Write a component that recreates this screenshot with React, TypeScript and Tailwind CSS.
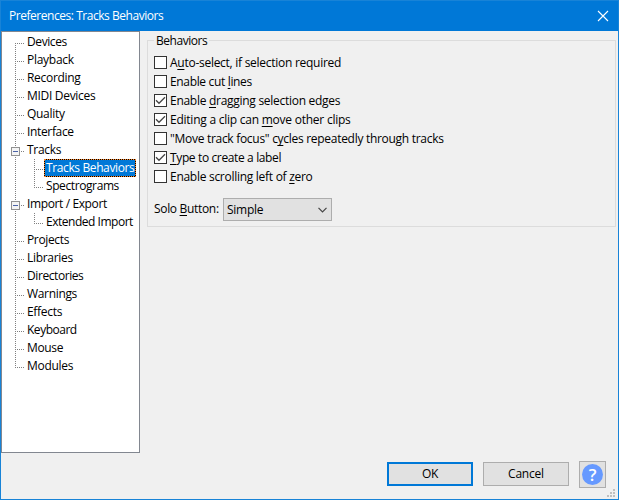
import React from 'react';

type TreeItem = { label: string; child?: boolean; open?: boolean; selected?: boolean; first?: boolean; last?: boolean; track: string };

const items: TreeItem[] = [
  { label: 'Devices', first: true, track: 'tracking-[-0.4px]' },
  { label: 'Playback', track: 'tracking-[-0.27px]' },
  { label: 'Recording', track: 'tracking-[-0.3px]' },
  { label: 'MIDI Devices', track: 'tracking-[-0.3px]' },
  { label: 'Quality', track: 'tracking-[-0.3px]' },
  { label: 'Interface', track: 'tracking-[-0.35px]' },
  { label: 'Tracks', open: true, track: 'tracking-[-0.3px]' },
  { label: 'Tracks Behaviors', child: true, selected: true, track: 'tracking-[-0.38px]' },
  { label: 'Spectrograms', child: true, last: true, track: 'tracking-[-0.4px]' },
  { label: 'Import / Export', open: true, track: 'tracking-[-0.38px]' },
  { label: 'Extended Import', child: true, last: true, track: 'tracking-[-0.48px]' },
  { label: 'Projects', track: 'tracking-[-0.35px]' },
  { label: 'Libraries', track: 'tracking-[-0.3px]' },
  { label: 'Directories', track: 'tracking-[-0.42px]' },
  { label: 'Warnings', track: 'tracking-[-0.33px]' },
  { label: 'Effects', track: 'tracking-[-0.3px]' },
  { label: 'Keyboard', track: 'tracking-[-0.48px]' },
  { label: 'Mouse', track: 'tracking-[-0.35px]' },
  { label: 'Modules', last: true, track: 'tracking-[-0.3px]' },
];

function Branches({ item }: { item: TreeItem }) {
  const x = item.child ? 32.5 : 13.5;
  const dash = { stroke: '#808080', strokeDasharray: '1 1' };
  return (
    <svg width="44" height="18" className="absolute left-0 top-0" shapeRendering="crispEdges" fill="none">
      {item.child && <path d="M13.5 0V18" {...dash} />}
      <path d={`M${x} ${item.first ? 10 : 0}V${item.last ? 11 : 18}`} {...dash} />
      <path d={`M${x - 0.5} 10.5h9`} {...dash} />
      {item.open && (
        <>
          <rect x="9.5" y="6.5" width="8" height="8" fill="#f4f4f4" stroke="#919191" />
          <path d="M11 10.5h5" stroke="#4b63a7" />
        </>
      )}
    </svg>
  );
}

function TreeRow({ item }: { item: TreeItem }) {
  return (
    <li className={`relative flex h-[18px] ${item.child ? 'pl-[42px]' : 'pl-[23px]'}`}>
      <Branches item={item} />
      <span className={`h-[18px] whitespace-nowrap pl-0.5 leading-[18px] ${item.track} ${item.selected ? 'w-[92px] bg-[#0078d7] text-white inset-ring inset-ring-black outline-1 -outline-offset-1 outline-dotted outline-[#ff8728]' : ''}`}>
        {item.label}
      </span>
    </li>
  );
}

type Option = { before: string; key: string; after: string; on?: boolean; track: string };
const options: Option[] = [
  { before: 'A', key: 'u', after: 'to-select, if selection required', track: 'tracking-[-0.27px]' },
  { before: 'Enable cut ', key: 'l', after: 'ines', track: 'tracking-[-0.34px]' },
  { before: 'Enable ', key: 'd', after: 'ragging selection edges', on: true, track: 'tracking-[-0.28px]' },
  { before: 'Editing a clip can ', key: 'm', after: 'ove other clips', on: true, track: 'tracking-[-0.24px]' },
  { before: '"Move track focus" c', key: 'y', after: 'cles repeatedly through tracks', track: 'tracking-[-0.29px]' },
  { before: '', key: 'T', after: 'ype to create a label', on: true, track: 'tracking-[-0.37px]' },
  { before: 'Enable scrolling left of ', key: 'z', after: 'ero', track: 'tracking-[-0.28px]' },
];

function Key({ children }: { children: string }) {
  return <span className="underline decoration-1 underline-offset-2 [text-decoration-skip-ink:none]">{children}</span>;
}

function CheckRow({ option }: { option: Option }) {
  return (
    <div className="flex h-[19px] items-center">
      <span className="mr-[3px] h-[13px] w-[13px] shrink-0 border border-[#333] bg-white">
        {option.on && (
          <svg width="11" height="11" fill="none" stroke="#444" strokeWidth="1.3">
            <path d="M1 5.3L4 8.3L10 2.3" />
          </svg>
        )}
      </span>
      <span className={`whitespace-pre ${option.track}`}>{option.before}<Key>{option.key}</Key>{option.after}</span>
    </div>
  );
}

export default function App() {
  return (
    <div className="relative flex h-[500px] w-[619px] flex-col overflow-hidden border border-[#1883d7] bg-[#f0f0f0] font-['Open_Sans','Noto_Sans',sans-serif] text-[12px] leading-[18px] text-black">
      <header className="flex h-[30px] shrink-0 items-center justify-between bg-[#0078d7] pl-2 pr-[9px] text-white">
        <span className="tracking-[-0.46px]">Preferences: Tracks Behaviors</span>
        <svg width="12" height="12" stroke="white" strokeWidth="1.1"><path d="M1 1L11 11M11 1L1 11" /></svg>
      </header>
      <main className="flex h-[422px] shrink-0">
        <ul className="w-[139px] shrink-0 border border-[#828790] bg-white pt-px">
          {items.map((item) => <TreeRow key={item.label} item={item} />)}
        </ul>
        <fieldset className="ml-[7px] mt-[9px] h-[187px] w-[469px] shrink-0 border border-[#dcdcdc] px-1.5">
          <div className="-mt-[9px] flex h-[18px]"><span className="bg-[#f0f0f0] px-0.5 tracking-[-0.45px]">Behaviors</span></div>
          <div className="mt-[3px]">
            {options.map((option) => <CheckRow key={option.after} option={option} />)}
          </div>
          <div className="mt-[11px] flex h-6 items-center">
            <span className="w-[69px] whitespace-nowrap tracking-[-0.32px]">Solo <Key>B</Key>utton:</span>
            <button className="mt-px flex h-[23px] w-[109px] items-center justify-between border border-[#adadad] bg-[#e1e1e1] pl-[3px] pr-1">
              <span className="tracking-[-0.25px]">Simple</span>
              <svg width="9" height="6" fill="none" stroke="#444" strokeWidth="1.2"><path d="M.5 .8L4.5 4.8L8.5 .8" /></svg>
            </button>
          </div>
        </fieldset>
      </main>
      <footer className="flex items-start pl-[386px] pt-2">
        <button className="mt-px h-6 w-[86px] border-2 border-[#0078d7] bg-[#e1e1e1] leading-5 tracking-[-0.3px]">OK</button>
        <button className="ml-[10px] mt-px h-6 w-[86px] border border-[#adadad] bg-[#e1e1e1] leading-[22px] tracking-[-0.2px]">Cancel</button>
        <button className="ml-[10px] flex h-[27px] w-[27px] items-center justify-center border border-[#adadad] bg-[#e1e1e1]">
          <span className="flex h-[21px] w-[21px] items-center justify-center rounded-full bg-[#6699ff] text-[17px] font-semibold leading-5 text-white">?</span>
        </button>
      </footer>
      <svg width="8" height="8" className="absolute bottom-[2px] right-[3px]" fill="#bfbfbf">
        <path d="M6 0h2v2h-2zM3 3h2v2h-2zM6 3h2v2h-2zM0 6h2v2h-2zM3 6h2v2h-2zM6 6h2v2h-2z" />
      </svg>
    </div>
  );
}
